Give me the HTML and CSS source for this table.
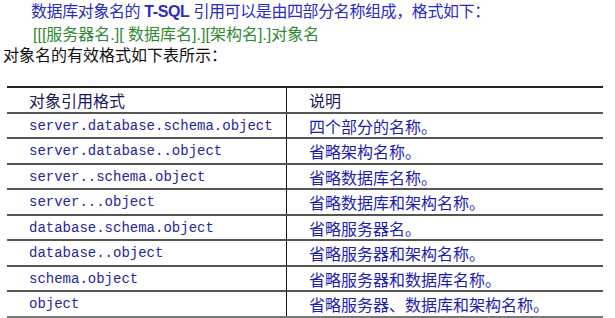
FILE: index.html
```
<!DOCTYPE html>
<html lang="zh-CN">
<head>
    <meta charset="UTF-8">
    <title>对象名的有效格式</title>
    <link rel="stylesheet" href="styles.css">
</head>
<body>
    <p class="intro">数据库对象名的 <b>T-SQL</b> 引用可以是由四部分名称组成，格式如下：</p>
    <p class="syntax">[[[服务器名.][ 数据库名].][架构名].]对象名</p>
    <p class="lead">对象名的有效格式如下表所示：</p>

    <div class="fmt-table">
        <div class="fmt-row head">
            <div class="cell">对象引用格式</div>
            <div class="cell">说明</div>
        </div>
        <div class="fmt-row">
            <div class="cell code">server.database.schema.object</div>
            <div class="cell">四个部分的名称。</div>
        </div>
        <div class="fmt-row">
            <div class="cell code">server.database..object</div>
            <div class="cell">省略架构名称。</div>
        </div>
        <div class="fmt-row">
            <div class="cell code">server..schema.object</div>
            <div class="cell">省略数据库名称。</div>
        </div>
        <div class="fmt-row">
            <div class="cell code">server...object</div>
            <div class="cell">省略数据库和架构名称。</div>
        </div>
        <div class="fmt-row">
            <div class="cell code">database.schema.object</div>
            <div class="cell">省略服务器名。</div>
        </div>
        <div class="fmt-row">
            <div class="cell code">database..object</div>
            <div class="cell">省略服务器和架构名称。</div>
        </div>
        <div class="fmt-row">
            <div class="cell code">schema.object</div>
            <div class="cell">省略服务器和数据库名称。</div>
        </div>
        <div class="fmt-row last">
            <div class="cell code">object</div>
            <div class="cell">省略服务器、数据库和架构名称。</div>
        </div>
    </div>
</body>
</html>
```

FILE: styles.css
```
body {
    margin: 0;
    padding: 2px 0 0 0;
    background-color: #fff;
    font-family: "Liberation Sans", "Noto Sans CJK SC", sans-serif;
}

p {
    margin: 0;
    font-size: 16px;
    line-height: 20px;
}

.intro {
    padding-left: 31px;
    color: #2a2ac4;
    letter-spacing: -0.4px;
}

.intro b {
    font-weight: bold;
}

.syntax {
    margin-top: 3px;
    padding-left: 33px;
    color: #2f8a2f;
}

.lead {
    margin-top: 1px;
    padding-left: 3px;
    color: #111;
}

.fmt-table {
    margin: 20px 0 0 7px;
    width: 596px;
}

.fmt-row {
    display: grid;
    grid-template-columns: 280px 1fr;
    height: 25.5px;
    border-top: 2px solid #555;
    box-sizing: border-box;
}

.fmt-row.head {
    border-top-color: #222;
}

.fmt-row.last {
    border-bottom: 2px solid #777;
    height: 27.5px;
}

.cell {
    display: flex;
    align-items: center;
    padding-left: 22px;
    font-size: 16px;
    color: #1c1cb0;
    white-space: nowrap;
}

.cell:first-child {
    border-right: 1px solid #111;
}

.head .cell {
    color: #1a1a5a;
}

.code {
    font-family: "Liberation Mono", monospace;
    font-size: 14px;
    color: #26269a;
}
```
